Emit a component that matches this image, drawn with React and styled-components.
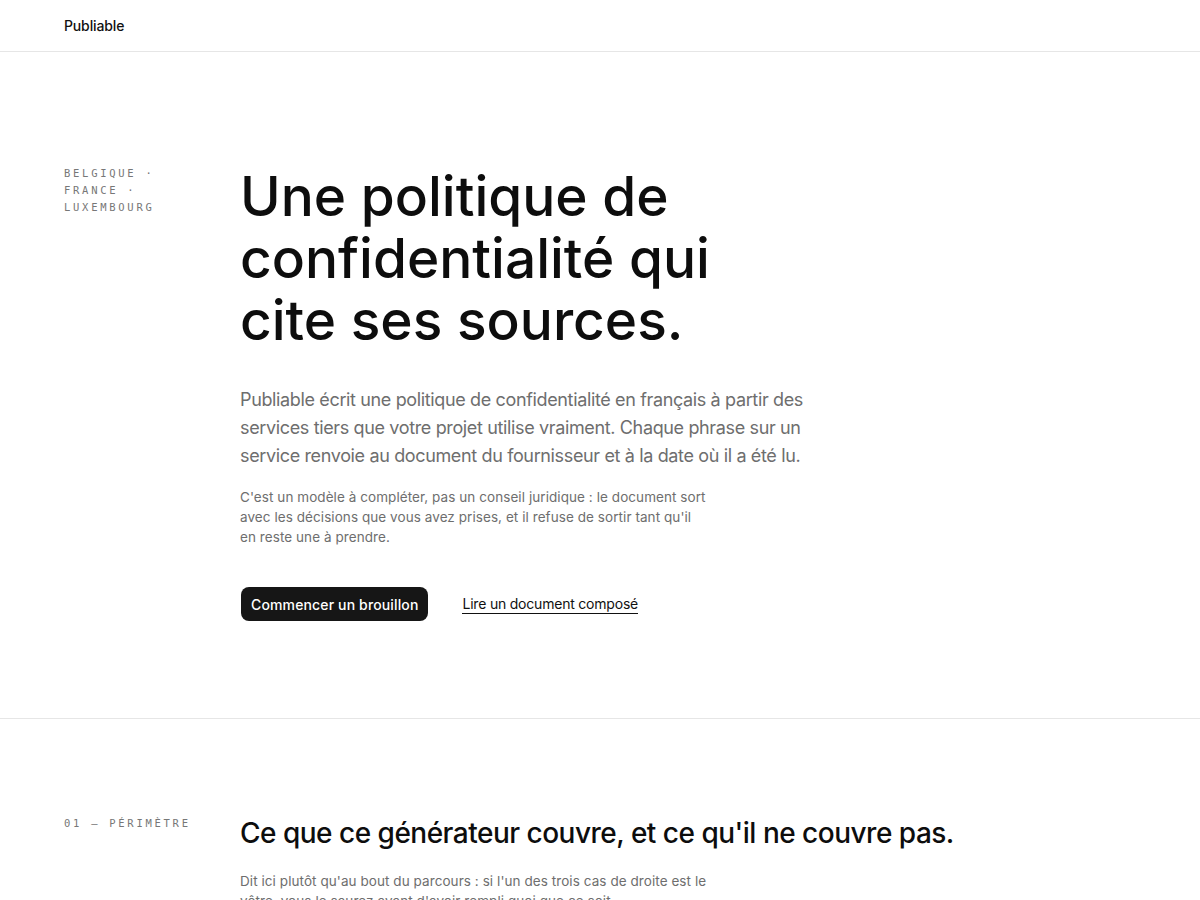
import React from "react";
import styled, { createGlobalStyle } from "styled-components";

const Global = createGlobalStyle`
  html, body { margin: 0; padding: 0; background: #fff; }
  body { font-family: Inter, "Noto Sans", sans-serif; color: #111; -webkit-font-smoothing: antialiased; }
  * { box-sizing: border-box; }
`;

const Header = styled.header`
  height: 52px;
  display: flex;
  align-items: center;
  padding: 0 64px;
  border-bottom: 1px solid #e6e6e6;
`;

const Brand = styled.div`
  font-size: 14px;
  font-weight: 500;
  letter-spacing: -0.01em;
  color: #111;
`;

const Section = styled.section`
  display: grid;
  grid-template-columns: 176px 1fr;
  padding: ${(p) => p.$pad};
  border-bottom: ${(p) => (p.$divider ? "1px solid #e6e6e6" : "none")};
`;

const Label = styled.div`
  font-family: "DejaVu Sans Mono", "Liberation Mono", monospace;
  font-size: 10.5px;
  line-height: 17px;
  letter-spacing: 0.26em;
  text-transform: uppercase;
  color: #777;
  width: ${(p) => p.$w || "auto"};
`;

const Main = styled.div`
  display: flex;
  flex-direction: column;
  align-items: flex-start;
`;

const Title = styled.h1`
  margin: 0;
  font-size: 55px;
  line-height: 62px;
  font-weight: 500;
  letter-spacing: 0;
  color: #0d0d0d;
  max-width: 540px;
`;

const Lead = styled.p`
  margin: 35px 0 0;
  font-size: 18px;
  line-height: 28px;
  letter-spacing: -0.02em;
  color: #6e6e6e;
  max-width: 570px;
`;

const Note = styled.p`
  margin: ${(p) => p.$m || "17px 0 0"};
  font-size: 13.5px;
  line-height: 20px;
  letter-spacing: 0.005em;
  color: #6e6e6e;
  max-width: ${(p) => p.$max || "470px"};
`;

const Actions = styled.div`
  display: flex;
  align-items: center;
  gap: 34px;
  margin-top: 40px;
`;

const Button = styled.a`
  display: inline-flex;
  align-items: center;
  height: 34px;
  padding: 0 10px;
  margin-left: 1px;
  border-radius: 8px;
  background: #161616;
  color: #fff;
  font-size: 14px;
  font-weight: 500;
  letter-spacing: 0.01em;
  text-decoration: none;
`;

const TextLink = styled.a`
  font-size: 14px;
  letter-spacing: -0.015em;
  color: #111;
  text-decoration: none;
  border-bottom: 1px solid #111;
  padding-bottom: 1px;
`;

const H2 = styled.h2`
  margin: 0;
  font-size: 28px;
  line-height: 36px;
  font-weight: 500;
  letter-spacing: -0.018em;
  color: #0d0d0d;
`;

export default function App() {
  return (
    <>
      <Global />
      <Header>
        <Brand>Publiable</Brand>
      </Header>
      <Section $pad="113px 64px 97px" $divider>
        <Label $w="112px">Belgique · France · Luxembourg</Label>
        <Main>
          <Title>Une politique de confidentialité qui cite ses sources.</Title>
          <Lead>
            Publiable écrit une politique de confidentialité en français à partir des services
            tiers que votre projet utilise vraiment. Chaque phrase sur un service renvoie au
            document du fournisseur et à la date où il a été lu.
          </Lead>
          <Note>
            C'est un modèle à compléter, pas un conseil juridique : le document sort avec les
            décisions que vous avez prises, et il refuse de sortir tant qu'il en reste une à
            prendre.
          </Note>
          <Actions>
            <Button href="#">Commencer un brouillon</Button>
            <TextLink href="#">Lire un document composé</TextLink>
          </Actions>
        </Main>
      </Section>
      <Section $pad="96px 64px 96px">
        <Label>01 — Périmètre</Label>
        <Main>
          <H2>Ce que ce générateur couvre, et ce qu'il ne couvre pas.</H2>
          <Note $m="20px 0 0" $max="490px">
            Dit ici plutôt qu'au bout du parcours : si l'un des trois cas de droite est le
            vôtre, vous le saurez avant d'avoir rempli quoi que ce soit.
          </Note>
        </Main>
      </Section>
    </>
  );
}
